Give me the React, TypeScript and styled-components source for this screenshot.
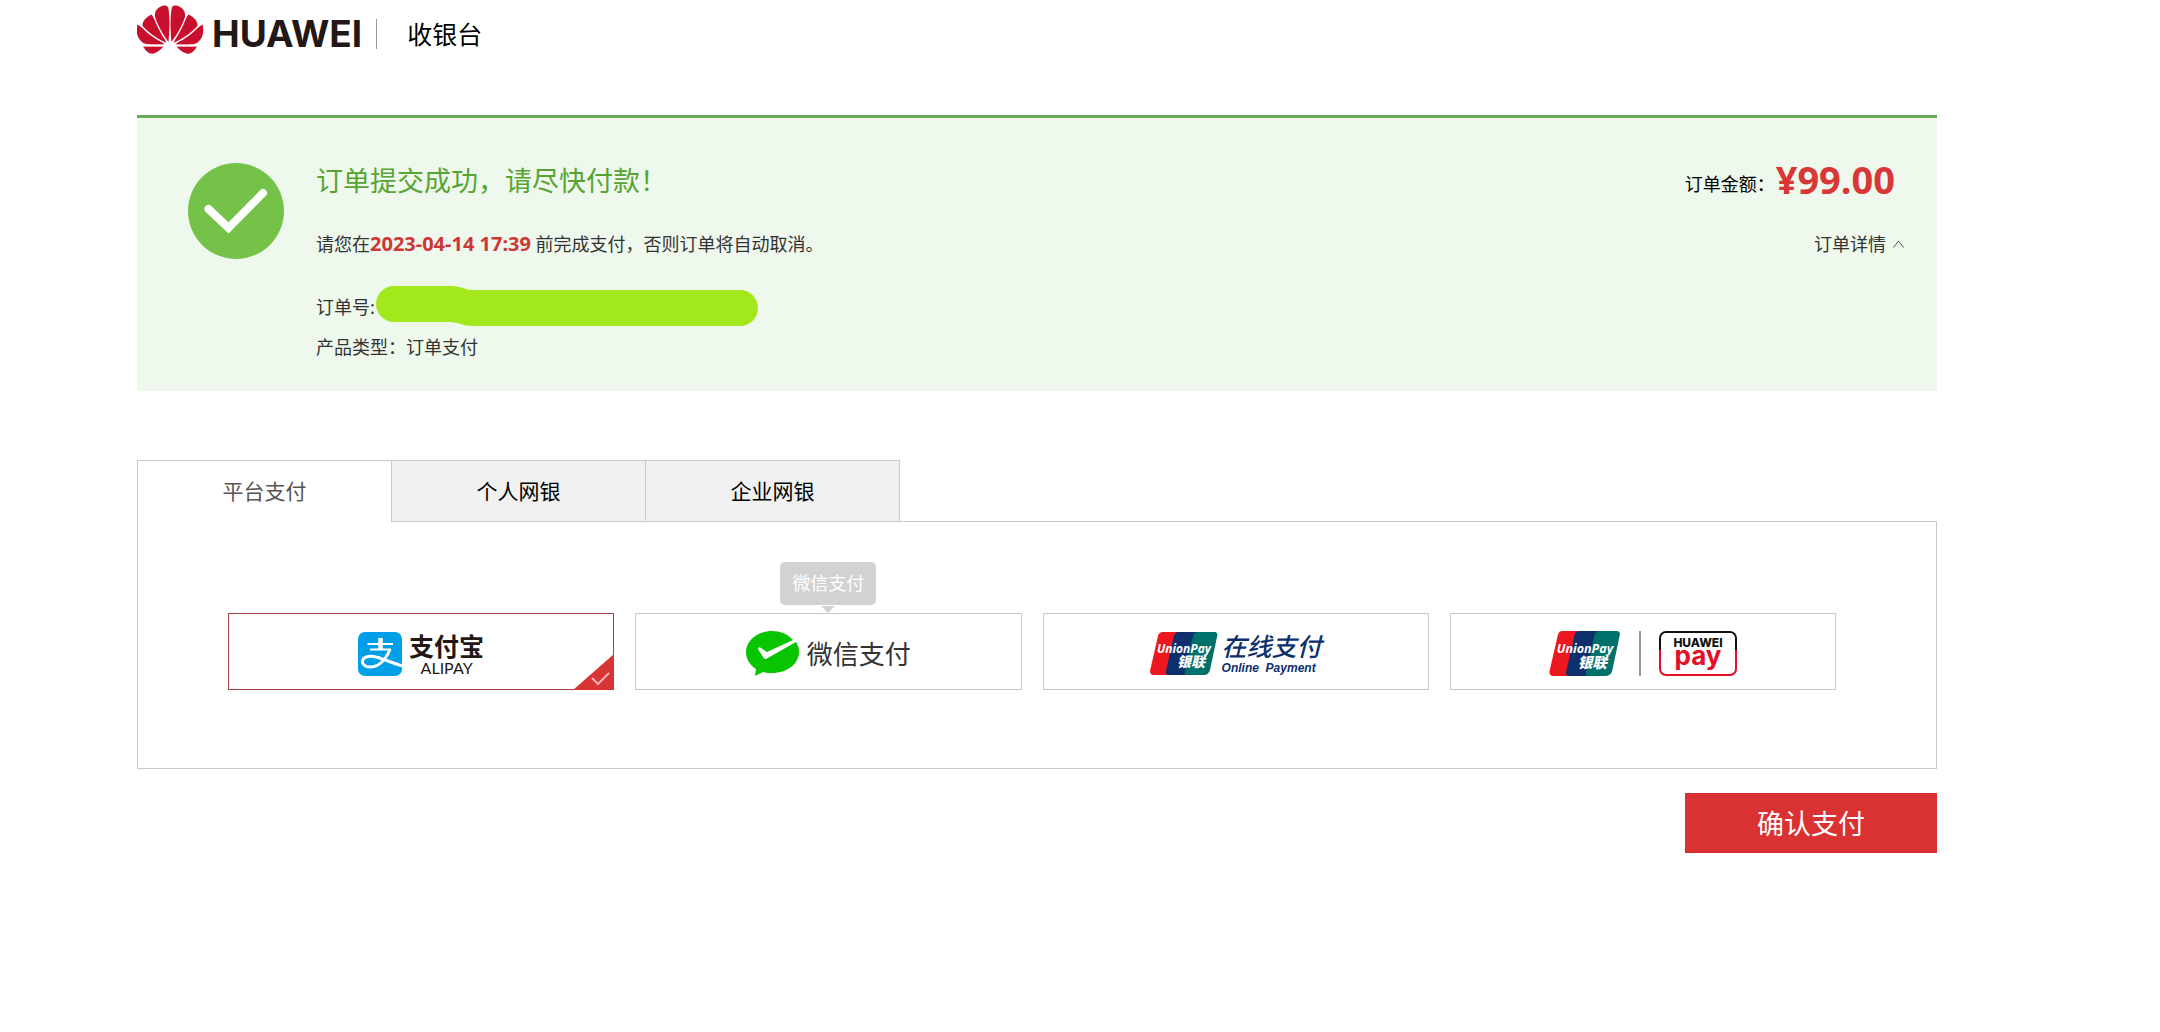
import React, { useState } from "react";
import styled, { createGlobalStyle } from "styled-components";

const GlobalStyle = createGlobalStyle`
  *, *::before, *::after { box-sizing: border-box; }
  body {
    margin: 0;
    background: #fff;
    color: #000;
    font-family: "Noto Sans", "Noto Sans CJK SC", sans-serif;
    font-size: 18px;
    line-height: 28px;
  }
  h1, h2, p, dl, dd, dt { margin: 0; font-weight: 400; }
  button { font-family: inherit; cursor: pointer; }
  svg { display: block; flex: none; }
`;

const Page = styled.div`
  padding: 0 223px 40px 137px;
`;

const Header = styled.header`
  display: flex;
  align-items: center;
  height: 68px;
`;

const Brand = styled.a`
  display: flex;
  align-items: center;
  gap: 8px;
  height: 58px;
  color: #231815;
  text-decoration: none;

  svg {
    align-self: flex-start;
  }
`;

const Wordmark = styled.span`
  font: 700 37px/40px Inter, sans-serif;
`;

const HeaderTitle = styled.h1`
  margin-left: 14px;
  padding-left: 30px;
  border-left: 1px solid #999;
  font-size: 25px;
  line-height: 30px;
`;

const Summary = styled.section`
  display: flex;
  align-items: flex-start;
  gap: 32px;
  margin-top: 47px;
  padding: 45px 33px 26px 51px;
  border-top: 3px solid #68a75c;
  background: #eef8ec;
  color: #333;
`;

const SummaryBody = styled.div`
  flex: 1;
`;

const SummaryTitle = styled.h2`
  color: #56a532;
  font-size: 27px;
  line-height: 36px;
`;

const Deadline = styled.p`
  margin-top: 31px;
`;

const DeadlineTime = styled.strong`
  color: #cf3636;
  font-size: 20px;
`;

const Details = styled.dl`
  display: grid;
  gap: 4px;
  margin-top: 31px;
`;

const Detail = styled.div`
  display: flex;
  align-items: center;
  height: 36px;
`;

const Total = styled.div`
  display: flex;
  flex-direction: column;
  align-items: flex-end;
`;

const Amount = styled.p`
  display: flex;
  align-items: flex-start;
  gap: 1px;
  height: 36px;
  padding-right: 9px;
  color: #000;
  line-height: 42px;
`;

const Price = styled.strong`
  color: #d93636;
  font-size: 38px;
  line-height: 32px;
`;

const Toggle = styled.button`
  display: flex;
  align-items: center;
  gap: 7px;
  margin-top: 31px;
  padding: 0;
  border: 0;
  background: none;
  color: #333;
  font-size: 18px;
  line-height: 28px;
`;

const Tabs = styled.div`
  display: flex;
  margin-top: 69px;
`;

const Tab = styled.button<{ $active: boolean }>`
  position: relative;
  width: 255px;
  height: 62px;
  margin: 0 -1px -1px 0;
  border: 1px solid #c9c9c9;
  border-bottom-color: ${(p) => (p.$active ? "#fff" : "#c9c9c9")};
  background: ${(p) => (p.$active ? "#fff" : "#f1f1f1")};
  color: ${(p) => (p.$active ? "#555" : "#000")};
  font-size: 21px;
  line-height: 30px;
`;

const Panel = styled.fieldset`
  display: grid;
  grid-template-columns: repeat(4, minmax(0, 1fr));
  gap: 21px;
  min-width: 0;
  margin: 0;
  padding: 91px 100px 78px 90px;
  border: 1px solid #c9c9c9;
`;

const Card = styled.label<{ $active: boolean }>`
  position: relative;
  display: flex;
  align-items: center;
  justify-content: center;
  height: 77px;
  padding-top: 4px;
  border: 1px solid ${(p) => (p.$active ? "#a84446" : "#c9c9c9")};
  cursor: pointer;
`;

const HiddenRadio = styled.input`
  position: absolute;
  inset: 0;
  width: 100%;
  height: 100%;
  margin: 0;
  opacity: 0;
  cursor: pointer;
`;

const Corner = styled.svg`
  position: absolute;
  right: -1px;
  bottom: -1px;
`;

const Tooltip = styled.span`
  position: absolute;
  bottom: 84px;
  left: 50%;
  width: 96px;
  margin-left: -48px;
  border-radius: 5px;
  background: #d2d2d2;
  color: #fff;
  line-height: 43px;
  text-align: center;

  &::after {
    content: "";
    position: absolute;
    top: 44px;
    left: 41px;
    border: 7px solid transparent;
    border-top-color: #d2d2d2;
    border-bottom: 0;
  }
`;

const Logo = styled.span<{ $gap: number }>`
  display: flex;
  align-items: center;
  gap: ${(p) => p.$gap}px;
  height: 46px;
`;

const LogoText = styled.span<{ $align: "center" | "flex-start" }>`
  display: flex;
  flex-direction: column;
  align-items: ${(p) => p.$align};
`;

const AlipayName = styled.span`
  color: #231815;
  font-size: 25px;
  font-weight: 700;
  line-height: 28px;
`;

const AlipayLatin = styled.span`
  color: #231815;
  font: 400 16px/16px Lato, sans-serif;
`;

const WechatName = styled.span`
  color: #333;
  font-size: 26px;
  line-height: 36px;
`;

const OnlineName = styled.span`
  color: #0d2f6c;
  font-size: 25px;
  font-style: italic;
  font-weight: 500;
  line-height: 28px;
`;

const OnlineLatin = styled.span`
  color: #0d2f6c;
  font: italic 700 12px/16px "Liberation Sans", sans-serif;
`;

const LogoDivider = styled.span`
  width: 2px;
  height: 45px;
  background: #999;
`;

const Actions = styled.div`
  display: flex;
  justify-content: flex-end;
  margin-top: 24px;
`;

const Confirm = styled.button`
  width: 252px;
  height: 60px;
  padding: 2px 0 0;
  border: 0;
  background: #da3232;
  color: #fff;
  font-size: 27px;
  line-height: 36px;
`;

const HuaweiMark = () => (
  <svg width="67" height="50" viewBox="0 0 67 50" fill="#c8102e" aria-hidden="true">
    {[false, true].map((flip) => (
      <g key={String(flip)} transform={flip ? "translate(66 0) scale(-1 1)" : undefined}>
        <path d="M31.500 37C32.500 27 33 14 31.500 4C31 1 29.500 0 27 0.500C21 1.500 17 6 18 12C19 19 26 29 31.500 37Z" />
        <path d="M29.300 38C27 28.500 21 18 14.500 9.500C9 12 4.500 17 5.500 22C7.500 28 20 34 29.300 38Z" />
        <path d="M27.500 39.500C21 33 10 26 0.500 19.500C-1 25 -0.500 31 3 35C6 39 10 39.500 15 39.500Z" />
        <path d="M26.500 41.500H6C9 46.500 12.500 49.500 16.500 48.500C20 47.500 23.500 45 26.500 41.500Z" />
        <path d="M16.500 10.500C20 20 25 29.500 30.500 37.500M3 19C9 27 18 33.500 29 38.500M5 40.500H28" fill="none" stroke="#fff" strokeWidth="1.300" />
      </g>
    ))}
  </svg>
);

const SuccessMark = () => (
  <svg width="96" height="96" viewBox="0 0 96 96" aria-hidden="true">
    <circle cx="48" cy="48" r="48" fill="#74c247" />
    <path d="M20.500 46L40.500 65L75 30" fill="none" stroke="#fff" strokeWidth="8" strokeLinecap="round" />
  </svg>
);

const RedactedNumber = () => (
  <svg width="384" height="42" viewBox="0 0 384 42" role="img" aria-label="订单号已隐藏">
    <path
      fill="#a3e81c"
      d="M19 0H76C86 0 90 4 98 4H365A18 18 0 0 1 365 40H100C86 40 84 36 74 36H19A18 18 0 0 1 19 0Z"
    />
  </svg>
);

const AlipayMark = () => (
  <svg width="44" height="44" viewBox="0 0 44 44" aria-hidden="true">
    <rect width="44" height="44" rx="7" fill="#009fe8" />
    <g fill="none" stroke="#fff">
      <path strokeWidth="4.500" d="M22.500 6V17" />
      <path strokeWidth="2" d="M9.500 12H35M12 17.500H33" />
      <path strokeWidth="3" d="M32 17.500C28 27 21 35 12 35C7 35 4 32 4.500 29C5 25 11 23 18 25C26 27 34 31 45 34" />
    </g>
  </svg>
);

const WechatMark = () => (
  <svg width="53" height="45" viewBox="0 0 53 45" aria-hidden="true">
    <path
      fill="#09c400"
      d="M26 0C12 0 0 9 0 21C0 28 4 34 10 38L9 45L17 41C20 42 23 42 26 42C41 42 53 33 53 21C53 17 52 14 50 11L20 28C19 28 18 28 17 26L12 18C12 16 14 16 15 17L21 21L47 9C42 3 34 0 26 0Z"
    />
  </svg>
);

const UnionPayMark = ({ width, height }: { width: number; height: number }) => (
  <svg width={width} height={height} viewBox="0 0 68 43" role="img" aria-label="UnionPay 银联">
    <path fill="#ed171f" d="M13 0H30L22 43H3C1 43 0 41 0 39L8 4C9 1 10 0 13 0Z" />
    <path fill="#0d2f6c" d="M29 0H48L40 43H19C17 43 15 41 16 39L24 4C25 1 26 0 29 0Z" />
    <path fill="#00706a" d="M48 0H64C67 0 68 2 67 5L60 38C59 41 57 43 54 43H37C35 43 34 41 35 39L43 4C44 1 45 0 48 0Z" />
    <text x="7" y="21" fill="#fff" fontFamily="Open Sans, sans-serif" fontSize="12" fontStyle="italic" fontWeight="700">
      UnionPay
    </text>
    <text x="27" y="35" fill="#fff" fontFamily="Noto Sans CJK SC, sans-serif" fontSize="14" fontStyle="italic" fontWeight="900">
      银联
    </text>
  </svg>
);

const HuaweiPayMark = () => (
  <svg width="78" height="45" viewBox="0 0 78 45" role="img" aria-label="HUAWEI pay">
    <path fill="none" stroke="#111" strokeWidth="2" d="M1 19V7A6 6 0 0 1 7 1H71A6 6 0 0 1 77 7V19" />
    <path fill="none" stroke="#e60d26" strokeWidth="2" d="M1 19V38A6 6 0 0 0 7 44H71A6 6 0 0 0 77 38V19" />
    <text x="39" y="16" fill="#111" textAnchor="middle" fontFamily="Inter, sans-serif" fontSize="12" fontWeight="800">
      HUAWEI
    </text>
    <text x="39" y="34" fill="#e60d26" textAnchor="middle" fontFamily="Inter, sans-serif" fontSize="26" fontWeight="700">
      pay
    </text>
  </svg>
);

const tabs = ["平台支付", "个人网银", "企业网银"];

const methods = [
  {
    id: "alipay",
    logo: (
      <Logo $gap={7}>
        <AlipayMark />
        <LogoText $align="center">
          <AlipayName>支付宝</AlipayName>
          <AlipayLatin>ALIPAY</AlipayLatin>
        </LogoText>
      </Logo>
    ),
  },
  {
    id: "wechat",
    tooltip: "微信支付",
    logo: (
      <Logo $gap={8}>
        <WechatMark />
        <WechatName>微信支付</WechatName>
      </Logo>
    ),
  },
  {
    id: "unionpay",
    logo: (
      <Logo $gap={4}>
        <UnionPayMark width={68} height={43} />
        <LogoText $align="flex-start">
          <OnlineName>在线支付</OnlineName>
          <OnlineLatin>Online&nbsp; Payment</OnlineLatin>
        </LogoText>
      </Logo>
    ),
  },
  {
    id: "huaweipay",
    logo: (
      <Logo $gap={18}>
        <UnionPayMark width={72} height={45} />
        <LogoDivider />
        <HuaweiPayMark />
      </Logo>
    ),
  },
];

export default function App() {
  const [tab, setTab] = useState(tabs[0]);
  const [method, setMethod] = useState("alipay");

  return (
    <>
      <GlobalStyle />
      <Page>
        <Header>
          <Brand href="#">
            <HuaweiMark />
            <Wordmark>HUAWEI</Wordmark>
          </Brand>
          <HeaderTitle>收银台</HeaderTitle>
        </Header>

        <main>
          <Summary>
            <SuccessMark />
            <SummaryBody>
              <SummaryTitle>订单提交成功，请尽快付款！</SummaryTitle>
              <Deadline>
                请您在<DeadlineTime>2023-04-14 17:39</DeadlineTime> 前完成支付，否则订单将自动取消。
              </Deadline>
              <Details>
                <Detail>
                  <dt>订单号:</dt>
                  <dd>
                    <RedactedNumber />
                  </dd>
                </Detail>
                <Detail>
                  <dt>产品类型：</dt>
                  <dd>订单支付</dd>
                </Detail>
              </Details>
            </SummaryBody>
            <Total>
              <Amount>
                订单金额：<Price>¥99.00</Price>
              </Amount>
              <Toggle type="button">
                订单详情
                <svg width="11" height="8" viewBox="0 0 11 8" fill="none" stroke="#555" aria-hidden="true">
                  <path d="M0.500 7.500L5.500 1L10.500 7.500" />
                </svg>
              </Toggle>
            </Total>
          </Summary>

          <Tabs role="tablist">
            {tabs.map((name) => (
              <Tab
                key={name}
                type="button"
                role="tab"
                aria-selected={tab === name}
                $active={tab === name}
                onClick={() => setTab(name)}
              >
                {name}
              </Tab>
            ))}
          </Tabs>

          <Panel aria-label="支付方式">
            {methods.map(({ id, logo, tooltip }) => (
              <Card key={id} $active={method === id}>
                <HiddenRadio
                  type="radio"
                  name="method"
                  value={id}
                  checked={method === id}
                  onChange={() => setMethod(id)}
                />
                {logo}
                {tooltip && <Tooltip role="tooltip">{tooltip}</Tooltip>}
                {method === id && (
                  <Corner width="41" height="36" viewBox="0 0 41 36" aria-hidden="true">
                    <path d="M41 0V36H0Z" fill="#d93434" />
                    <path d="M19 24L25 30L36 19" fill="none" stroke="#f6b4b4" strokeWidth="2" />
                  </Corner>
                )}
              </Card>
            ))}
          </Panel>

          <Actions>
            <Confirm type="button">确认支付</Confirm>
          </Actions>
        </main>
      </Page>
    </>
  );
}
